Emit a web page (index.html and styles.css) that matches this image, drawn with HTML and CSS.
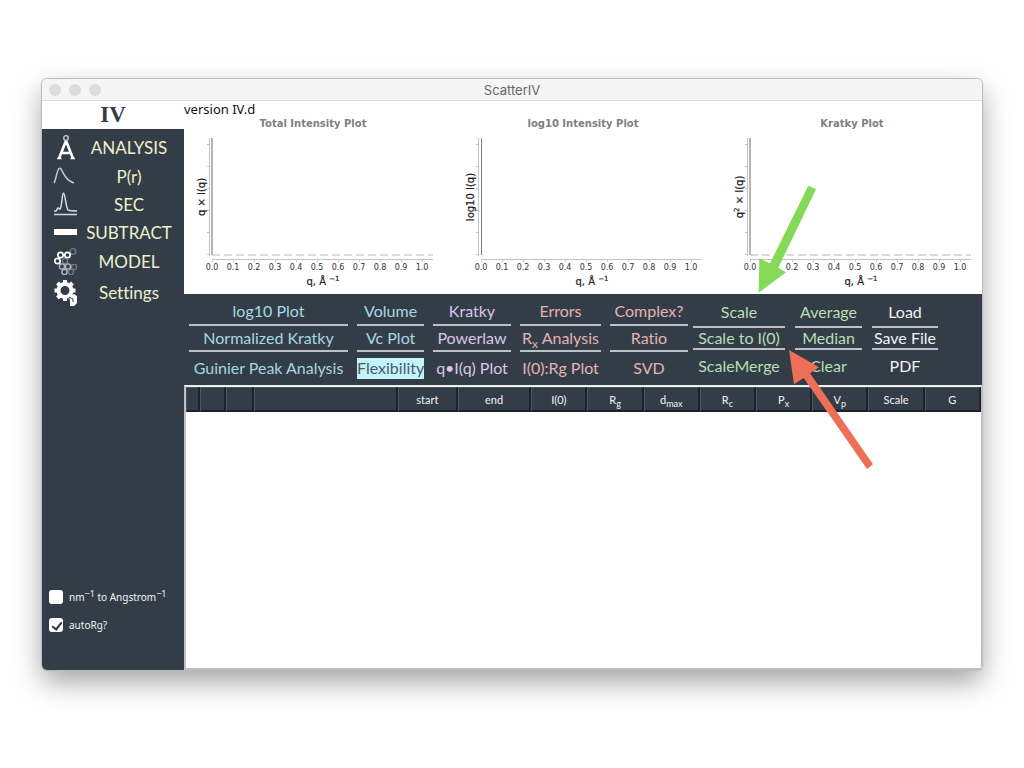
FILE: index.html
```html
<!DOCTYPE html>
<html lang="en">
<head>
<meta charset="utf-8">
<title>ScatterIV</title>
<link rel="stylesheet" href="styles.css">
</head>
<body>
<main class="window">
  <header class="titlebar">
    <span class="lights"><i></i><i></i><i></i></span>
    <h1 class="title">ScatterIV</h1>
  </header>
  <div class="content">
    <aside class="sidebar">
      <div class="logo">IV</div>
      <nav class="nav">
        <button type="button"><svg width="26" height="28" viewBox="0 0 26 28" fill="none" stroke="#fff"><circle cx="14" cy="4" r="2.300" stroke="#cfd3d8" stroke-width="1.300"/><path d="M7 24.500L13.500 8h1l6.500 16.500M9.500 19h9" stroke-width="2.600"/><path d="M5 24.500h4.500M18.500 24.500h4.500" stroke-width="1.500"/></svg><span>ANALYSIS</span></button>
        <button type="button"><svg width="26" height="24" viewBox="0 0 26 24" fill="none" stroke="#c4c9ce" stroke-width="1.500"><path d="M2 19C4 16 5 6 7 4.500c2-1.500 3 3 6 7.500s6 6 9 7"/></svg><span>P(r)</span></button>
        <button type="button"><svg width="26" height="26" viewBox="0 0 26 26" fill="none" stroke="#d5d8dc" stroke-width="1.500"><path d="M2 20h2l2-3 2 1C10 16 10 2 11.500 2S14 17 16 19c2 1 5 1 9 1M2 23.500h23"/></svg><span>SEC</span></button>
        <button type="button"><svg width="26" height="8" viewBox="0 0 26 8"><path d="M2 1h23v6H2z" fill="#fff"/></svg><span>SUBTRACT</span></button>
        <button type="button"><svg width="26" height="28" viewBox="0 0 26 28" fill="none" stroke-width="1.700"><g stroke="#737b85" stroke-width="1.300"><circle cx="21" cy="4.500" r="2.800"/><circle cx="13" cy="14" r="2.600"/><circle cx="22" cy="20" r="2.600"/><circle cx="19" cy="25" r="2.600"/></g><g stroke="#b4bac1" stroke-width="1.400"><circle cx="10" cy="19.500" r="2.600"/><circle cx="16" cy="19.500" r="2.600"/><circle cx="12.500" cy="25" r="2.600"/></g><g stroke="#fff"><circle cx="8.500" cy="8" r="2.700"/><circle cx="15.500" cy="8" r="2.700"/><circle cx="5.500" cy="14" r="2.700"/></g></svg><span>MODEL</span></button>
        <button type="button"><svg width="26" height="28" viewBox="0 0 26 28"><circle cx="13" cy="12.500" r="6.500" fill="none" stroke="#fff" stroke-width="4"/><path d="M13 2v4M13 19v4M2.500 12.500h4M19.500 12.500h4M5.500 5l3 3M17.500 17l3 3M5.500 20l3-3M17.500 8l3-3" stroke="#fff" stroke-width="4"/><path d="M17 18l5-2 3 2v7l-3 3h-4v-5z" fill="#fff"/><path d="M17 19l4 2v3" fill="none" stroke="#333d48" stroke-width="1"/></svg><span>Settings</span></button>
      </nav>
      <div class="options">
        <label><input type="checkbox"><span>nm<sup>−1</sup> to Angstrom<sup>−1</sup></span></label>
        <label><input type="checkbox" checked><span>autoRg?</span></label>
      </div>
    </aside>
    <section class="main">
      <div class="plots">
        <p class="version">version IV.d</p>
        <div class="charts">
          <svg class="chart" viewBox="0 0 260 178" role="img" aria-label="Total Intensity Plot">
            <text class="chart-title" x="129" y="11">Total Intensity Plot</text>
            <path class="rail" d="M25.500 22v118M28 143.500h221M23 28.500h3M23 50.500h3M23 72.500h3M23 94.500h3M23 116.500h3M23 138.500h3M28.500 143v3M49.500 143v3M70.500 143v3M91.500 143v3M112.500 143v3M133.500 143v3M154.500 143v3M175.500 143v3M196.500 143v3M217.500 143v3M238.500 143v3"/>
            <path class="axis" d="M28 22v117"/><path class="zero" d="M28 139h221"/>
            <g class="ticks"><text x="28" y="154">0.0</text><text x="49" y="154">0.1</text><text x="70" y="154">0.2</text><text x="91" y="154">0.3</text><text x="112" y="154">0.4</text><text x="133" y="154">0.5</text><text x="154" y="154">0.6</text><text x="175" y="154">0.7</text><text x="196" y="154">0.8</text><text x="217" y="154">0.9</text><text x="238" y="154">1.0</text></g>
            <text class="label" x="139" y="169">q, Å <tspan class="sup" dy="-4">−1</tspan></text>
            <text class="label" transform="translate(21 81) rotate(-90)">q × I(q)</text>
          </svg>
          <svg class="chart" viewBox="0 0 260 178" role="img" aria-label="log10 Intensity Plot">
            <text class="chart-title" x="130" y="11">log10 Intensity Plot</text>
            <path class="rail" d="M25.500 22v118M28 143.500h221M23 28.500h3M23 50.500h3M23 72.500h3M23 94.500h3M23 116.500h3M23 138.500h3M28.500 143v3M49.500 143v3M70.500 143v3M91.500 143v3M112.500 143v3M133.500 143v3M154.500 143v3M175.500 143v3M196.500 143v3M217.500 143v3M238.500 143v3"/>
            <path class="axis thin" d="M28.500 22v117"/>
            <g class="ticks"><text x="28" y="154">0.0</text><text x="49" y="154">0.1</text><text x="70" y="154">0.2</text><text x="91" y="154">0.3</text><text x="112" y="154">0.4</text><text x="133" y="154">0.5</text><text x="154" y="154">0.6</text><text x="175" y="154">0.7</text><text x="196" y="154">0.8</text><text x="217" y="154">0.9</text><text x="238" y="154">1.0</text></g>
            <text class="label" x="139" y="169">q, Å <tspan class="sup" dy="-4">−1</tspan></text>
            <text class="label" transform="translate(21 81) rotate(-90)">log10 I(q)</text>
          </svg>
          <svg class="chart" viewBox="0 0 260 178" role="img" aria-label="Kratky Plot">
            <text class="chart-title" x="130" y="11">Kratky Plot</text>
            <path class="rail" d="M25.500 22v118M28 143.500h221M23 28.500h3M23 50.500h3M23 72.500h3M23 94.500h3M23 116.500h3M23 138.500h3M28.500 143v3M49.500 143v3M70.500 143v3M91.500 143v3M112.500 143v3M133.500 143v3M154.500 143v3M175.500 143v3M196.500 143v3M217.500 143v3M238.500 143v3"/>
            <path class="axis" d="M28 22v117"/><path class="zero" d="M28 139h221"/>
            <g class="ticks"><text x="28" y="154">0.0</text><text x="49" y="154">0.1</text><text x="70" y="154">0.2</text><text x="91" y="154">0.3</text><text x="112" y="154">0.4</text><text x="133" y="154">0.5</text><text x="154" y="154">0.6</text><text x="175" y="154">0.7</text><text x="196" y="154">0.8</text><text x="217" y="154">0.9</text><text x="238" y="154">1.0</text></g>
            <text class="label" x="139" y="169">q, Å <tspan class="sup" dy="-4">−1</tspan></text>
            <text class="label" transform="translate(21 81) rotate(-90)">q<tspan class="sup" dy="-4">2</tspan><tspan dy="4"> × I(q)</tspan></text>
          </svg>
        </div>
      </div>
      <div class="toolbar">
        <div class="views">
          <div class="group cyan"><button type="button">log10 Plot</button><button type="button">Normalized Kratky</button><button type="button">Guinier Peak Analysis</button></div>
          <div class="group cyan"><button type="button">Volume</button><button type="button">Vc Plot</button><button type="button" class="active">Flexibility</button></div>
          <div class="group violet"><button type="button">Kratky</button><button type="button">Powerlaw</button><button type="button">q•I(q) Plot</button></div>
          <div class="group pink"><button type="button">Errors</button><button type="button"><span>R<sub>x</sub> Analysis</span></button><button type="button">I(0):Rg Plot</button></div>
          <div class="group pink"><button type="button">Complex?</button><button type="button">Ratio</button><button type="button">SVD</button></div>
        </div>
        <div class="actions">
          <div class="group tight green"><button type="button">Scale</button><button type="button">Scale to I(0)</button><button type="button">ScaleMerge</button></div>
          <div class="group tight green"><button type="button">Average</button><button type="button">Median</button><button type="button">Clear</button></div>
          <div class="group tight white"><button type="button">Load</button><button type="button">Save File</button><button type="button">PDF</button></div>
        </div>
      </div>
      <div class="datasets">
        <table>
          <colgroup><col class="c14"><col class="c26"><col class="c28"><col class="c143"><col class="c60"><col class="c73"><col span="8" class="c56"></colgroup>
          <thead><tr><th></th><th></th><th></th><th></th><th>start</th><th>end</th><th>I(0)</th><th>R<sub>g</sub></th><th>d<sub>max</sub></th><th>R<sub>c</sub></th><th>P<sub>x</sub></th><th>V<sub>p</sub></th><th>Scale</th><th>G</th></tr></thead>
        </table>
      </div>
    </section>
  </div>
  <svg class="arrows" viewBox="0 0 940 591" aria-hidden="true">
    <path fill="#84d957" d="M716.700 213.700L717.300 179.300L728 184.300L766.300 106.700L774 110.300L736.300 188.700L744 193.300Z"/>
    <path fill="#ed6f57" d="M747 271L777 288.300L768 294.300L831 385.300L825 390L761.700 299L752 305.300Z"/>
  </svg>
</main>
</body>
</html>
```
FILE: styles.css
```css
* { box-sizing: border-box; }

body {
  margin: 0;
  padding: 79px 42px 98px;
  min-height: 100vh;
  display: flex;
  background: #fff;
  font-family: "Century Gothic", Lato, sans-serif;
  font-variant-ligatures: none;
}

button {
  margin: 0;
  padding: 0;
  border: 0;
  background: none;
  color: inherit;
  font: inherit;
  white-space: nowrap;
}

.window {
  position: relative;
  flex: 1;
  min-width: 0;
  display: flex;
  flex-direction: column;
  border-radius: 5px;
  box-shadow: 0 0 1px 1px #bbb, 0 12px 28px rgba(0, 0, 0, .36);
}

.titlebar {
  display: grid;
  grid-template-columns: 1fr auto 1fr;
  align-items: center;
  height: 22px;
  padding: 0 7px;
  background: #f5f5f5;
  border-bottom: 1px solid #ddd;
  border-radius: 5px 5px 0 0;
}

.lights { display: flex; gap: 8px; }
.lights i { width: 12px; height: 12px; border-radius: 50%; background: #dcdcdc; }

.title {
  margin: 0;
  font: 13px Inter, sans-serif;
  color: #666;
}

.content { flex: 1; display: flex; }

.sidebar {
  width: 142px;
  flex: none;
  display: flex;
  flex-direction: column;
  background: #333d48;
  border-radius: 0 0 0 5px;
}

.logo {
  height: 28px;
  background: #fff;
  color: #333d48;
  font: bold 23px/28px "Liberation Serif", serif;
  text-align: center;
}

.nav {
  display: grid;
  grid-template-rows: 29px 28px 28px 28px 30px 32px;
  padding: 4px 10px 0;
  color: #f0f0cb;
  font-size: 17px;
}
.nav button {
  display: grid;
  grid-template-columns: 26px 1fr;
  align-items: center;
  text-align: center;
}
.nav span { margin: 0 -6px 0 0; }

.options {
  margin-top: auto;
  padding: 0 7px 38px;
  display: grid;
  gap: 14px;
  color: #f4f4f4;
  font: 10px/14px "Lucida Grande", "Noto Sans", sans-serif;
}
.options label { display: flex; align-items: center; gap: 6px; white-space: nowrap; }
.options sup { font-size: 9px; line-height: 0; }
.options input {
  appearance: none;
  width: 14px;
  height: 14px;
  margin: 0;
  border-radius: 3px;
  background: #fff;
}
.options input:checked::after {
  content: "";
  display: block;
  width: 4px;
  height: 8px;
  margin: 2px 0 0 5px;
  border: solid #333;
  border-width: 0 2px 2px 0;
  transform: rotate(38deg);
}

.main {
  flex: 1;
  min-width: 0;
  display: flex;
  flex-direction: column;
  background: #fff;
}

.plots { background: #fff; }
.version {
  margin: 0;
  height: 15px;
  font: 13px/16px "Lucida Grande", "Noto Sans", sans-serif;
  color: #111;
}
.charts {
  display: grid;
  grid-template-columns: repeat(3, 1fr);
  gap: 9px;
}
.chart { display: block; width: 100%; font-family: "Lucida Grande", "DejaVu Sans", sans-serif; }
.chart text { text-anchor: middle; }
.chart-title { font-size: 10px; font-weight: bold; fill: #808080; }
.label { font-size: 10px; fill: #222; stroke: #222; stroke-width: .2; }
.sup { font-size: 7px; }
.ticks { font-size: 8px; fill: #333; }
.rail { stroke: #c4c4c4; fill: none; }
.axis { stroke: #b5b5b5; stroke-width: 2; }
.thin { stroke: #808080; stroke-width: 1; }
.zero { stroke: #b8b8b8; stroke-dasharray: 8 4; }

.toolbar {
  display: flex;
  gap: 5px;
  height: 91px;
  padding: 3px 5px 0;
  background: #333d48;
  font-size: 16px;
}
.views {
  display: grid;
  grid-template-columns: 159px 67px 78px 81px 78px;
  column-gap: 9px;
}
.actions {
  display: grid;
  grid-template-columns: 92px 67px 66px;
  column-gap: 10px;
}
.group {
  display: grid;
  grid-template-rows: 29px 26px 32px;
  justify-items: stretch;
}
.tight { grid-template-rows: 31px 22px 32px; }
.group button { display: flex; align-items: center; justify-content: center; line-height: 20px; }
.group button:not(:last-child) { border-bottom: 2px solid #bcc2c6; }
.group sub { font-size: 12px; line-height: 0; }
.group .active { align-self: center; height: 21px; background: #c3f3fc; color: #4b5c68; }
.cyan { color: #a8d8e0; }
.violet { color: #dcc6e8; }
.pink { color: #e6b2b4; }
.green { color: #b9dfb4; }
.white { color: #f2f2f2; }

.datasets {
  flex: 1;
  border: 1px solid #bfbfbf;
  border-width: 2px 1px 2px 2px;
  border-top-color: #eee;
}
table {
  width: 100%;
  table-layout: fixed;
  border-collapse: separate;
  border-spacing: 0;
}
th {
  height: 25px;
  padding: 1px 0 0;
  background: #333d48;
  border: 1px solid #4a5968;
  border-width: 1px 2px 2px 1px;
  border-right-color: #1c222b;
  border-bottom-color: #1c222b;
  color: #f4f4f4;
  font-size: 11px;
  font-weight: 400;
  line-height: 16px;
}
th sub { font-size: 9px; line-height: 0; }
.c14 { width: 14px; }
.c26 { width: 26px; }
.c28 { width: 28px; }
.c143 { width: 143px; }
.c60 { width: 60px; }
.c73 { width: 73px; }
.c56 { width: 56px; }

.arrows {
  position: absolute;
  top: 0;
  left: 0;
  width: 100%;
  pointer-events: none;
}
```
